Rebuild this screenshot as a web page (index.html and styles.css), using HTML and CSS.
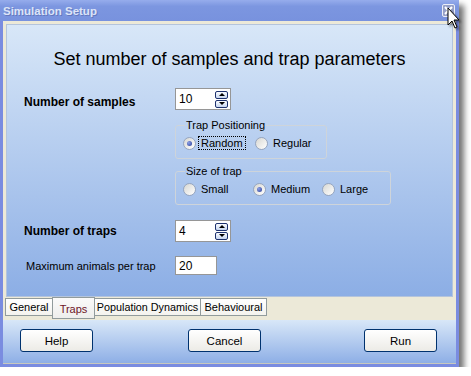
FILE: index.html
```html
<!DOCTYPE html>
<html>
    <head>
        <title>Simulation Setup</title>

        <link rel="stylesheet" href="styles.css">
    </head>

    <body>
        <div class="window">
            <div class="titlebar">
                <span class="title">Simulation Setup</span>
                <span class="close-btn">
                    <svg width="9" height="9" viewBox="0 0 9 9">
                        <path d="M1 1 L8 8 M8 1 L1 8" stroke="white" stroke-width="2"/>
                    </svg>
                </span>
            </div>

            <div class="body">
                <div class="frame">
                    <div class="panel">
                        <h1 class="heading">Set number of samples and trap parameters</h1>

                        <div class="form">
                            <div class="label-bold first">Number of samples</div>
                            <div class="spinbox">
                                <span class="spin-value">10</span>
                                <span class="spin-btns">
                                    <span class="spin-btn up"></span>
                                    <span class="spin-btn down"></span>
                                </span>
                            </div>

                            <div></div>
                            <fieldset class="group group-pos">
                                <legend>Trap Positioning</legend>
                                <div class="radio-row">
                                    <span class="option opt-random">
                                        <span class="radio checked"></span>
                                        <span class="radio-text focus">Random</span>
                                    </span>
                                    <span class="option">
                                        <span class="radio"></span>
                                        <span class="radio-text">Regular</span>
                                    </span>
                                </div>
                            </fieldset>

                            <div></div>
                            <fieldset class="group group-size">
                                <legend>Size of trap</legend>
                                <div class="radio-row">
                                    <span class="option opt-small">
                                        <span class="radio"></span>
                                        <span class="radio-text">Small</span>
                                    </span>
                                    <span class="option opt-medium">
                                        <span class="radio checked"></span>
                                        <span class="radio-text">Medium</span>
                                    </span>
                                    <span class="option">
                                        <span class="radio"></span>
                                        <span class="radio-text">Large</span>
                                    </span>
                                </div>
                            </fieldset>

                            <div class="label-bold">Number of traps</div>
                            <div class="spinbox">
                                <span class="spin-value">4</span>
                                <span class="spin-btns">
                                    <span class="spin-btn up"></span>
                                    <span class="spin-btn down"></span>
                                </span>
                            </div>

                            <div class="label-small">Maximum animals per trap</div>
                            <div class="textbox">20</div>
                        </div>
                    </div>
                </div>

                <div class="tabbar">
                    <span class="tab tab-general">General</span>
                    <span class="tab tab-traps active">Traps</span>
                    <span class="tab tab-pop">Population Dynamics</span>
                    <span class="tab tab-behav">Behavioural</span>
                </div>

                <div class="buttonbar">
                    <button class="btn btn-help">Help</button>
                    <button class="btn btn-cancel">Cancel</button>
                    <button class="btn btn-run">Run</button>
                </div>
            </div>
        </div>

        <svg class="cursor" width="14" height="24" viewBox="0 0 14 24">
            <path d="M1 1 L1 18 L5 14 L8 21 L10 20 L7 13 L12 13 Z" fill="white" stroke="black" stroke-width="1"/>
        </svg>
    </body>
</html>
```

FILE: styles.css
```css
body {
    margin: 0;
    background-color: white;
    font-family: "Liberation Sans", Arial, sans-serif;
    font-size: 11px;
    color: black;
}

.window {
    width: 459px;
    height: 367px;
    display: flex;
    flex-direction: column;
    box-shadow: 5px 5px 6px rgba(0, 0, 0, 0.55);
}

.titlebar {
    height: 21px;
    display: flex;
    align-items: center;
    justify-content: space-between;
    padding: 0 3px;
    background: linear-gradient(rgb(150, 172, 236), rgb(124, 150, 224) 30%, rgb(120, 146, 222));
}

.title {
    font-size: 11.5px;
    font-weight: bold;
    color: rgb(220, 228, 248);
    text-shadow: 1px 1px 0 rgb(100, 120, 190);
}

.close-btn {
    width: 13px;
    height: 13px;
    margin-right: 1px;
    box-sizing: border-box;
    border: 1px solid rgb(235, 238, 248);
    border-radius: 2px;
    background-color: rgb(150, 160, 200);
    display: flex;
    align-items: center;
    justify-content: center;
}

.body {
    flex: 1;
    display: flex;
    flex-direction: column;
    border: solid rgb(122, 140, 224);
    border-width: 0 3px 3px 3px;
}

.frame {
    padding: 3px 3px 0 3px;
    background-color: rgb(236, 233, 216);
}

.panel {
    height: 273px;
    box-sizing: border-box;
    border: 1px solid rgb(180, 196, 220);
    background: linear-gradient(rgb(216, 231, 248), rgb(140, 174, 229));
    padding: 0 0 0 17px;
}

.heading {
    margin: 24px 0 0 0;
    padding-right: 17px;
    font-size: 18px;
    font-weight: normal;
    line-height: 20px;
    text-align: center;
}

.form {
    display: grid;
    grid-template-columns: 151px auto;
    align-items: center;
    justify-items: start;
    margin-top: 19px;
}

.label-bold {
    font-size: 12px;
    font-weight: bold;
}

.label-bold.first {
    align-self: end;
    margin-bottom: 1px;
}

.label-small {
    padding-left: 2px;
    margin-top: 14px;
}

.spinbox {
    width: 56px;
    height: 22px;
    box-sizing: border-box;
    border: 1px solid rgb(150, 150, 150);
    background-color: white;
    display: flex;
    align-items: center;
    justify-content: space-between;
    padding: 0 2px 0 3px;
}

.spin-value {
    font-size: 12px;
}

.spin-btns {
    display: flex;
    flex-direction: column;
    gap: 1px;
}

.spin-btn {
    width: 13px;
    height: 8px;
    box-sizing: border-box;
    border: 1px solid rgb(30, 50, 110);
    border-radius: 2px;
    background: linear-gradient(rgb(250, 252, 255), rgb(200, 215, 240));
    display: flex;
    align-items: center;
    justify-content: center;
}

.spin-btn.up::after {
    content: "";
    border: 3px solid transparent;
    border-bottom: 3px solid black;
    border-top: 0;
}

.spin-btn.down::after {
    content: "";
    border: 3px solid transparent;
    border-top: 3px solid black;
    border-bottom: 0;
}

.group {
    margin: 0;
    min-width: 0;
    box-sizing: border-box;
    padding: 5px 0 8px 7px;
    border: 1px solid rgb(206, 212, 218);
    border-radius: 3px;
}

.group legend {
    padding: 0 1px;
    margin-left: 2px;
    font-size: 11px;
}

.group-pos {
    width: 152px;
    margin-top: 9px;
}

.group-size {
    width: 216px;
    margin-top: 6px;
    margin-bottom: 15px;
}

.radio-row {
    display: flex;
    align-items: center;
    font-size: 11px;
}

.option {
    display: flex;
    align-items: center;
}

.opt-random {
    width: 72px;
}

.opt-small {
    width: 70px;
}

.opt-medium {
    width: 69px;
}

.radio {
    width: 13px;
    height: 13px;
    box-sizing: border-box;
    border-radius: 50%;
    border: 1px solid rgb(150, 165, 190);
    background: linear-gradient(135deg, rgb(215, 215, 210), rgb(255, 255, 255));
    display: flex;
    align-items: center;
    justify-content: center;
}

.radio.checked::after {
    content: "";
    width: 5px;
    height: 5px;
    border-radius: 50%;
    background: radial-gradient(circle at 35% 35%, rgb(140, 160, 230), rgb(40, 60, 150));
}

.radio-text {
    margin-left: 2px;
    padding: 0 2px;
    border: 1px dotted transparent;
}

.radio-text.focus {
    border-color: black;
}

.textbox {
    width: 42px;
    height: 19px;
    margin-top: 14px;
    box-sizing: border-box;
    border: 1px solid rgb(150, 150, 150);
    background-color: white;
    padding: 2px 0 0 3px;
    font-size: 12px;
}

.tabbar {
    height: 23px;
    box-sizing: border-box;
    background-color: rgb(236, 233, 216);
    display: flex;
    align-items: flex-start;
    padding: 1px 0 0 2px;
}

.tab {
    height: 18px;
    box-sizing: border-box;
    border: 1px solid rgb(145, 155, 156);
    margin-left: -1px;
    padding-top: 2px;
    text-align: center;
    white-space: nowrap;
    background: linear-gradient(rgb(255, 255, 255), rgb(244, 243, 238));
    font-size: 11px;
}

.tab-general {
    width: 48px;
    margin-left: 0;
}

.tab-traps {
    width: 43px;
}

.tab-pop {
    width: 107px;
    font-size: 10.8px;
}

.tab-behav {
    width: 67px;
}

.tab.active {
    height: 22px;
    margin-top: -1px;
    padding-top: 5px;
    color: rgb(110, 20, 40);
    background: linear-gradient(rgb(250, 250, 250), rgb(238, 238, 236));
}

.buttonbar {
    flex: 1;
    display: flex;
    align-items: center;
    border-bottom: 1px solid rgb(200, 200, 190);
    background: linear-gradient(rgb(216, 231, 248), rgb(142, 175, 230));
    padding-bottom: 2px;
}

.btn {
    width: 73px;
    height: 23px;
    border: 1px solid rgb(0, 50, 110);
    border-radius: 3px;
    background: linear-gradient(rgb(255, 255, 255), rgb(236, 235, 230));
    font-family: "Liberation Sans", Arial, sans-serif;
    font-size: 11.5px;
    color: black;
    padding: 0;
}

.btn-help {
    margin-left: 17px;
}

.btn-cancel {
    margin-left: 95px;
}

.btn-run {
    margin-left: 103px;
}

.cursor {
    position: absolute;
    left: 447px;
    top: 7px;
    filter: drop-shadow(2px 2px 1px rgba(0, 0, 0, 0.4));
}
```
